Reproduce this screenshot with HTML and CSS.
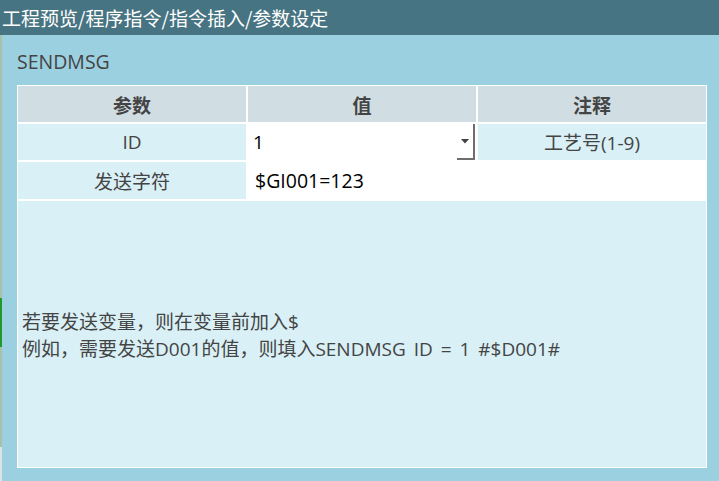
FILE: index.html
```html
<!DOCTYPE html>
<html lang="zh-CN">
<head>
<meta charset="utf-8">
<link rel="stylesheet" href="styles.css">
</head>
<body>
<div class="titlebar">工程预览/程序指令/指令插入/参数设定</div>
<div class="main">
  <div class="strip"></div>
  <div class="panel">
    <div class="label">SENDMSG</div>
    <div class="table">
      <div class="cell head">参数</div>
      <div class="cell head">值</div>
      <div class="cell head">注释</div>

      <div class="cell light">ID</div>
      <div class="cell value combo">
        <span class="combo-text">1</span>
        <span class="combo-btn"><svg width="8" height="5" viewBox="0 0 8 5"><path d="M0 0H8L4 4.5Z" fill="#404040"/></svg></span>
      </div>
      <div class="cell light">工艺号(1-9)</div>

      <div class="cell light">发送字符</div>
      <div class="cell value wide">$GI001=123</div>

      <div class="cell note">
        <div>若要发送变量，则在变量前加入$</div>
        <div>例如，需要发送D001的值，则填入SENDMSG ID = 1 #$D001#</div>
      </div>
    </div>
  </div>
</div>
</body>
</html>
```

FILE: styles.css
```css
html, body {
  margin: 0;
  padding: 0;
}
body {
  width: 719px;
  height: 481px;
  overflow: hidden;
  font-family: "Open Sans", "Noto Sans CJK SC", sans-serif;
  background: #9bd0e1;
}
.titlebar {
  height: 35px;
  line-height: 35px;
  background: #477482;
  color: #ffffff;
  font-family: "Noto Sans CJK SC", sans-serif;
  font-size: 19px;
  padding-left: 2px;
  white-space: nowrap;
}
.main {
  display: flex;
  height: 446px;
}
.strip {
  width: 2px;
  background: linear-gradient(to bottom,
    #a9c1ab 0, #a9c1ab 263px,
    #1f9a2a 263px, #1f9a2a 312px,
    #a9c1ab 312px, #a9c1ab 412px,
    #dde3de 412px);
}
.panel {
  flex: 1;
  background: #9bd0e1;
  padding: 14px 12px 0 15px;
}
.label {
  height: 26px;
  line-height: 26px;
  margin-bottom: 10px;
  font-size: 19.5px;
  color: #444444;
}
.table {
  display: grid;
  grid-template-columns: 228px 228px 228px;
  grid-template-rows: 36px 36px 37px 266px;
  gap: 2px;
  padding: 1px;
  background: #ffffff;
  width: 688px;
}
.cell {
  display: flex;
  align-items: center;
  justify-content: center;
  font-size: 19px;
  color: #444444;
}
.head {
  background: #d0dde2;
  font-weight: bold;
  font-family: "Noto Sans CJK SC", sans-serif;
}
.light {
  background: #d9f0f6;
}
.value {
  background: #ffffff;
  color: #000000;
  justify-content: flex-start;
  padding-left: 6px;
}
.wide {
  grid-column: span 2;
  padding-left: 7px;
  font-size: 19.5px;
}
.combo {
  padding-left: 5px;
  align-items: stretch;
}
.combo-text {
  flex: 1;
  display: flex;
  align-items: center;
}
.combo-btn {
  width: 16px;
  display: flex;
  align-items: center;
  justify-content: center;
  border-right: 2px solid #6e6e6e;
  border-bottom: 2px solid #6e6e6e;
  margin-right: 1px;
}
.note {
  grid-column: span 3;
  background: #d9f0f6;
  flex-direction: column;
  align-items: flex-start;
  justify-content: center;
  padding-left: 4px;
  padding-top: 4px;
  font-size: 19px;
  line-height: 27px;
  word-spacing: 3px;
}
```
